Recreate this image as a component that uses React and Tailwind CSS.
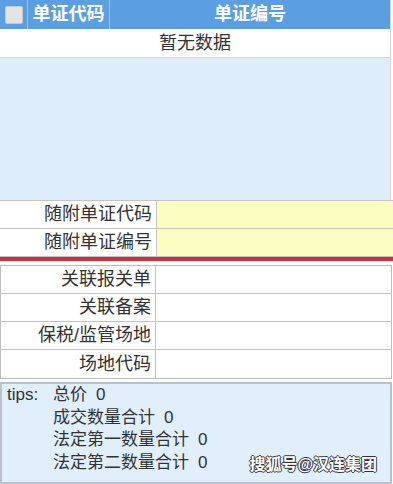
import React from "react";

const font = { fontFamily: '"Liberation Sans", "Noto Sans CJK SC", sans-serif' };

const attachRows = ["随附单证代码", "随附单证编号"];
const linkRows = ["关联报关单", "关联备案", "保税/监管场地", "场地代码"];
const tips = [
  ["总价", 0],
  ["成交数量合计", 0],
  ["法定第一数量合计", 0],
  ["法定第二数量合计", 0],
];

const App = () => {
  return (
    <div className="w-[393px] h-[484px] bg-white overflow-hidden text-[18px] text-[#333]" style={font}>
      {/* Grid */}
      <div className="w-[391px] border-r border-[#d6d6d6]">
        <div className="flex h-[29px] bg-[#5b9fe2] text-white font-bold">
          <div className="w-[28px] flex items-center justify-center border-r border-[#9cc6ef]">
            <div className="w-[18px] h-[18px] rounded-[2px] bg-[#e4e4e4] border border-[#c8c8c8]" />
          </div>
          <div className="w-[82px] flex items-center justify-center border-r border-[#9cc6ef]">单证代码</div>
          <div className="flex-1 flex items-center justify-center">单证编号</div>
        </div>
        <div className="h-[29px] flex items-center justify-center bg-white border-b border-[#d6d6d6]">暂无数据</div>
        <div className="h-[142px] bg-[#deedfc]" />
      </div>

      {/* Attached docs */}
      <div className="border-t border-[#c4c4c4]">
        {attachRows.map((label) => (
          <div key={label} className="flex h-[28px] border-b border-[#c4c4c4]">
            <div className="w-[157px] flex items-center justify-end pr-[4px] border-r border-[#c4c4c4] bg-white">{label}</div>
            <div className="flex-1 bg-[#fafcc2]" />
          </div>
        ))}
      </div>
      <div className="h-[4px] bg-[#c9303a]" />

      {/* Linked info */}
      <div className="mt-[4px] w-[392px] border border-[#bdbdbd]">
        {linkRows.map((label, i) => (
          <div key={label} className={`flex h-[28px] ${i < linkRows.length - 1 ? "border-b border-[#c4c4c4]" : ""}`}>
            <div className="w-[155px] flex items-center justify-end pr-[4px] border-r border-[#c4c4c4]">{label}</div>
            <div className="flex-1" />
          </div>
        ))}
      </div>

      {/* Tips */}
      <div className="relative mt-[3px] w-[392px] h-[102px] bg-[#e1eefc] border-2 border-[#b9c1ca] pl-[5px] text-[17px]">
        <div className="flex">
          <div className="w-[46px] leading-[22px]">tips:</div>
          <div className="flex flex-col leading-[22.5px]">
            {tips.map(([label, value]) => (
              <div key={label}>
                {label}
                <span className="ml-[9px]">{value}</span>
              </div>
            ))}
          </div>
        </div>
        <div
          className="absolute right-[13px] bottom-[5px] text-white font-bold text-[16px]"
          style={{ textShadow: "1px 0 #333, -1px 0 #333, 0 1px #333, 0 -1px #333" }}
        >
          搜狐号@汉连集团
        </div>
      </div>
    </div>
  );
};

export default App;
